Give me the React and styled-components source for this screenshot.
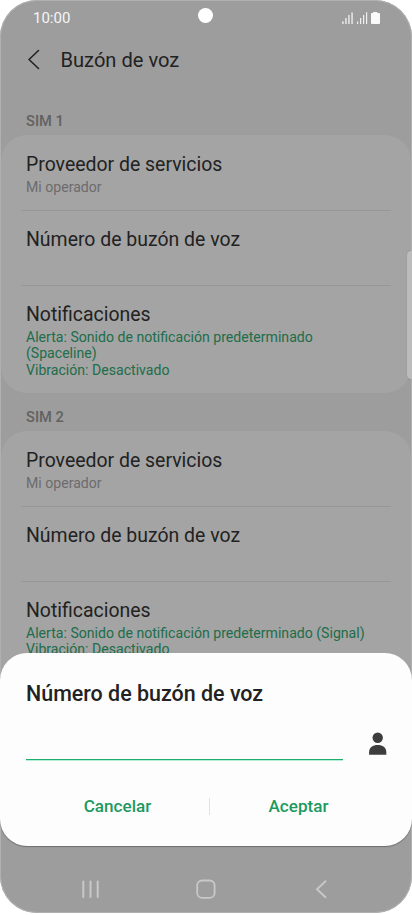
import React from "react";
import styled, { createGlobalStyle } from "styled-components";

const GlobalStyle = createGlobalStyle`
  *, *::before, *::after { box-sizing: border-box; }
  body { margin: 0; background: #fff; font-family: Roboto, sans-serif; overflow: hidden; }
  svg { display: block; }
`;

const Phone = styled.main`
  position: relative;
  width: 412px;
  height: 913px;
  padding: 1px;
  overflow: hidden;
  border-radius: 37px;
  background: #9d9d9d;
  box-shadow: inset 0 0 0 1px #b0b0b0;
  color: #222;
`;

const StatusBar = styled.header`
  display: flex;
  align-items: center;
  justify-content: space-between;
  height: 34px;
  padding: 0 31px 0 32px;
  color: #f5f5f5;
`;

const Clock = styled.time`
  font-size: 15px;
  line-height: 18px;
`;

const Camera = styled.span`
  position: absolute;
  top: 8.3px;
  left: 198.3px;
  width: 15px;
  height: 15px;
  border-radius: 50%;
  background: #fff;
`;

const TitleBar = styled.div`
  display: flex;
  align-items: center;
  gap: 20.5px;
  height: 49px;
  padding-left: 26px;
`;

const PageTitle = styled.h1`
  margin: 0;
  font-size: 20.1px;
  font-weight: 400;
  line-height: 24px;
`;

const SectionLabel = styled.h2`
  display: flex;
  align-items: center;
  height: ${(p) => p.$height}px;
  margin: 0;
  padding: ${(p) => p.$top}px 25px 0;
  color: #626262;
  font-size: 14.7px;
  font-weight: 500;
  line-height: 18px;
`;

const Card = styled.section`
  height: 258px;
  padding: 0 20px;
  border-radius: 26px;
  background: #a4a4a4;
`;

const Row = styled.div`
  height: ${(p) => p.$height}px;
  padding: ${(p) => p.$top}px 5px 0;
  border-bottom: 1px solid #979797;

  &:last-child {
    border-bottom: 0;
  }
`;

const RowTitle = styled.div`
  font-size: 19.45px;
  line-height: 25px;
  white-space: nowrap;
`;

const RowDetail = styled.div`
  color: ${(p) => (p.$accent ? "#206d4a" : "#6c6c6c")};
  font-size: 14.1px;
  line-height: 16.3px;
  padding-top: 2px;
  white-space: pre-line;
`;

const ScrollHandle = styled.span`
  position: absolute;
  top: 251px;
  right: 0;
  width: 5px;
  height: 128px;
  border-radius: 4px 0 0 4px;
  background: #bcbcbc;
  box-shadow: 0 0 1px #777;
`;

const Dialog = styled.section`
  position: absolute;
  top: 653px;
  left: 0;
  width: 412px;
  height: 193px;
  padding: 28px 25px 0 26px;
  border-radius: 27px;
  background: #fdfdfd;
  box-shadow: 0 1px 1px rgba(0, 0, 0, 0.3);
`;

const DialogTitle = styled.h2`
  margin: 0;
  font-size: 21.45px;
  font-weight: 500;
  line-height: 26px;
`;

const FieldRow = styled.div`
  display: flex;
  align-items: flex-start;
  justify-content: space-between;
  height: 53px;
`;

const NumberInput = styled.input`
  width: 317px;
  height: 53px;
  padding: 16px 0 0;
  border: 0;
  border-bottom: 1px solid #20ad70;
  border-radius: 0;
  box-shadow: 0 1px 0 #b5eed4;
  outline: 0;
  background: transparent;
  font: 400 18px Roboto, sans-serif;
`;

const ContactButton = styled.button`
  margin: 25px 0 0;
  padding: 0;
  border: 0;
  background: none;
`;

const Actions = styled.div`
  display: grid;
  grid-template-columns: 183px 1px 1fr;
  align-items: center;
  height: 46px;
  margin-top: 23px;
`;

const Action = styled.button`
  padding: 0 0 1px;
  border: 0;
  background: none;
  color: #20995f;
  font: 500 17.1px/24px Roboto, sans-serif;
`;

const ActionDivider = styled.span`
  height: 17px;
  background: #e2e2e2;
`;

const NavigationBar = styled.nav`
  position: absolute;
  right: 0;
  bottom: 1px;
  left: 0;
  display: grid;
  grid-template-columns: repeat(3, 115.4px);
  align-items: center;
  justify-content: center;
  justify-items: center;
  height: 46px;
`;

function StatusIcons() {
  return (
    <svg width="38" height="14" viewBox="0 0 38 14" fill="#f0f0f0">
      <path opacity=".75" d="M0 10.300h1.800v2.700H0zM3 7h1.800v6H3zM6 4h1.800v9H6zM9.200 1.500H11V13H9.200z" />
      <path d="M15 10.500h1.200V13H15zM18 7h1.200v6H18zM21 4h1.200v9H21zM24 1.300h1.200V13H24z" />
      <path fill="#fafafa" d="M31.200 1h4.100v1.100H37q1 0 1 1V12q0 1-1 1h-7q-1 0-1-1V3.100q0-1 1-1h1.200z" />
    </svg>
  );
}

function SimCard({ alert }) {
  return (
    <Card>
      <Row $height={76} $top={17}>
        <RowTitle>Proveedor de servicios</RowTitle>
        <RowDetail>Mi operador</RowDetail>
      </Row>
      <Row $height={75} $top={16}>
        <RowTitle>Número de buzón de voz</RowTitle>
      </Row>
      <Row $height={107} $top={16}>
        <RowTitle>Notificaciones</RowTitle>
        <RowDetail $accent>{alert + "\nVibración: Desactivado"}</RowDetail>
      </Row>
    </Card>
  );
}

export default function App() {
  return (
    <>
      <GlobalStyle />
      <Phone>
        <StatusBar>
          <Clock>10:00</Clock>
          <Camera />
          <StatusIcons />
        </StatusBar>
        <TitleBar>
          <svg width="13" height="22" viewBox="0 0 13 22" fill="none" stroke="#222" strokeWidth="1.6" strokeLinecap="round" strokeLinejoin="round">
            <path d="M11.500 1.500 2 10.500l9.500 9" />
          </svg>
          <PageTitle>Buzón de voz</PageTitle>
        </TitleBar>
        <SectionLabel $height={51} $top={23}>SIM 1</SectionLabel>
        <SimCard alert={"Alerta: Sonido de notificación predeterminado\n(Spaceline)"} />
        <SectionLabel $height={38} $top={10}>SIM 2</SectionLabel>
        <SimCard alert="Alerta: Sonido de notificación predeterminado (Signal)" />
        <ScrollHandle />
        <Dialog>
          <DialogTitle>Número de buzón de voz</DialogTitle>
          <FieldRow>
            <NumberInput aria-label="Número de buzón de voz" />
            <ContactButton aria-label="Contactos">
              <svg width="18" height="23" viewBox="0 0 18 23" fill="#3d3d3d">
                <circle cx="8.700" cy="5.700" r="5.200" />
                <path d="M.1 22.700v-2.500C.1 15.500 3.900 13 8.700 13s8.600 2.500 8.600 7.200v2.500z" />
              </svg>
            </ContactButton>
          </FieldRow>
          <Actions>
            <Action>Cancelar</Action>
            <ActionDivider />
            <Action>Aceptar</Action>
          </Actions>
        </Dialog>
        <NavigationBar>
          <svg width="19" height="20" viewBox="0 0 19 20" stroke="#c8c8c8" strokeWidth="2" strokeLinecap="round">
            <path d="M2.300 2.500v15.500M9.500 2.500v15.500M16.700 2.500v15.500" />
          </svg>
          <svg width="20" height="20" viewBox="0 0 20 20" fill="none" stroke="#c8c8c8" strokeWidth="1.800">
            <rect x="1.200" y="1.500" width="17.400" height="17.400" rx="5" />
          </svg>
          <svg width="12" height="20" viewBox="0 0 12 20" fill="none" stroke="#c8c8c8" strokeWidth="1.900" strokeLinecap="round">
            <path d="M10.500 2.300 2 10.300l8.500 8" />
          </svg>
        </NavigationBar>
      </Phone>
    </>
  );
}
